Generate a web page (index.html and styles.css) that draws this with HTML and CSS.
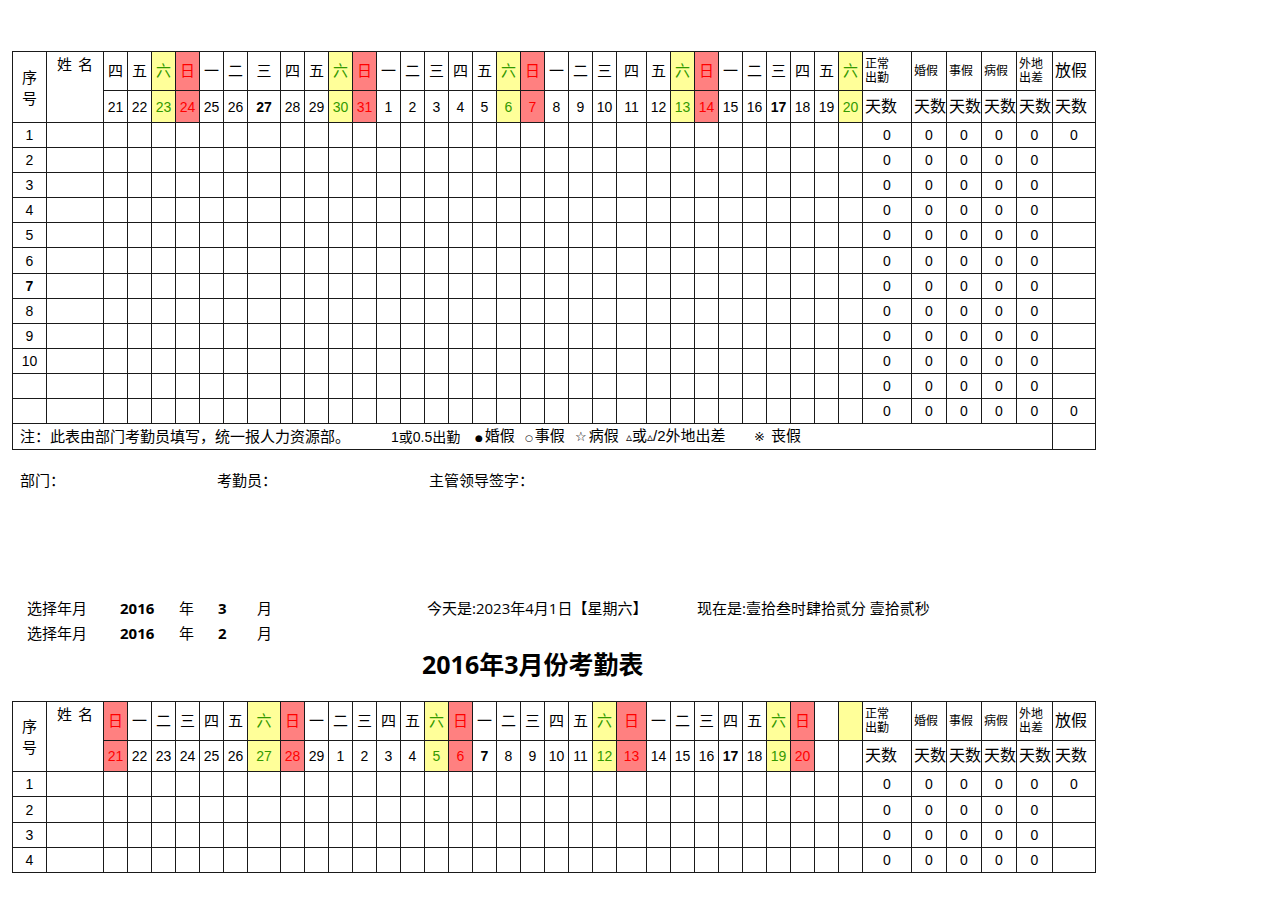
FILE: index.html
```html
<!DOCTYPE html>
<html lang="zh-CN">
<head>
<meta charset="utf-8">
<title>考勤表</title>
<link rel="stylesheet" href="styles.css">
</head>
<body>
<div class="page">

<table class="sheet top">
<colgroup>
<col class="c-seq"><col class="c-name">
<col class="d"><col class="d"><col class="d"><col class="d"><col class="d"><col class="d"><col class="d33">
<col class="d"><col class="d"><col class="d"><col class="d"><col class="d"><col class="d"><col class="d"><col class="d"><col class="d"><col class="d"><col class="d"><col class="d"><col class="d"><col class="d"><col class="d30">
<col class="d"><col class="d"><col class="d"><col class="d"><col class="d"><col class="d"><col class="d"><col class="d"><col class="d">
<col class="c49"><col class="c35"><col class="c35"><col class="c35"><col class="c36"><col class="c43">
</colgroup>
<tr class="h1">
<td rowspan="2" class="seq-h">序<br>号</td>
<td rowspan="2" class="name-h">姓 名</td>
<td>四</td><td>五</td><td class="sat">六</td><td class="sun">日</td><td>一</td><td>二</td><td>三</td><td>四</td><td>五</td><td class="sat">六</td><td class="sun">日</td><td>一</td><td>二</td><td>三</td><td>四</td><td>五</td><td class="sat">六</td><td class="sun">日</td><td>一</td><td>二</td><td>三</td><td>四</td><td>五</td><td class="sat">六</td><td class="sun">日</td><td>一</td><td>二</td><td>三</td><td>四</td><td>五</td><td class="sat">六</td>
<td class="lab sm">正常<br>出勤</td><td class="lab xs">婚假</td><td class="lab xs">事假</td><td class="lab xs">病假</td><td class="lab sm">外地<br>出差</td><td class="lab lg">放假</td>
</tr>
<tr class="h2">
<td>21</td><td>22</td><td class="sat">23</td><td class="sun">24</td><td>25</td><td>26</td><td class="b">27</td><td>28</td><td>29</td><td class="sat">30</td><td class="sun">31</td><td>1</td><td>2</td><td>3</td><td>4</td><td>5</td><td class="sat">6</td><td class="sun">7</td><td>8</td><td>9</td><td>10</td><td>11</td><td>12</td><td class="sat">13</td><td class="sun">14</td><td>15</td><td>16</td><td class="b">17</td><td>18</td><td>19</td><td class="sat">20</td>
<td class="lab lg">天数</td><td class="lab lg">天数</td><td class="lab lg">天数</td><td class="lab lg">天数</td><td class="lab lg">天数</td><td class="lab lg">天数</td>
</tr>
<tr class="r"><td>1</td><td></td><td></td><td></td><td></td><td></td><td></td><td></td><td></td><td></td><td></td><td></td><td></td><td></td><td></td><td></td><td></td><td></td><td></td><td></td><td></td><td></td><td></td><td></td><td></td><td></td><td></td><td></td><td></td><td></td><td></td><td></td><td></td><td>0</td><td>0</td><td>0</td><td>0</td><td>0</td><td>0</td></tr>
<tr class="r"><td>2</td><td></td><td></td><td></td><td></td><td></td><td></td><td></td><td></td><td></td><td></td><td></td><td></td><td></td><td></td><td></td><td></td><td></td><td></td><td></td><td></td><td></td><td></td><td></td><td></td><td></td><td></td><td></td><td></td><td></td><td></td><td></td><td></td><td>0</td><td>0</td><td>0</td><td>0</td><td>0</td><td></td></tr>
<tr class="r"><td>3</td><td></td><td></td><td></td><td></td><td></td><td></td><td></td><td></td><td></td><td></td><td></td><td></td><td></td><td></td><td></td><td></td><td></td><td></td><td></td><td></td><td></td><td></td><td></td><td></td><td></td><td></td><td></td><td></td><td></td><td></td><td></td><td></td><td>0</td><td>0</td><td>0</td><td>0</td><td>0</td><td></td></tr>
<tr class="r"><td>4</td><td></td><td></td><td></td><td></td><td></td><td></td><td></td><td></td><td></td><td></td><td></td><td></td><td></td><td></td><td></td><td></td><td></td><td></td><td></td><td></td><td></td><td></td><td></td><td></td><td></td><td></td><td></td><td></td><td></td><td></td><td></td><td></td><td>0</td><td>0</td><td>0</td><td>0</td><td>0</td><td></td></tr>
<tr class="r"><td>5</td><td></td><td></td><td></td><td></td><td></td><td></td><td></td><td></td><td></td><td></td><td></td><td></td><td></td><td></td><td></td><td></td><td></td><td></td><td></td><td></td><td></td><td></td><td></td><td></td><td></td><td></td><td></td><td></td><td></td><td></td><td></td><td></td><td>0</td><td>0</td><td>0</td><td>0</td><td>0</td><td></td></tr>
<tr class="r"><td>6</td><td></td><td></td><td></td><td></td><td></td><td></td><td></td><td></td><td></td><td></td><td></td><td></td><td></td><td></td><td></td><td></td><td></td><td></td><td></td><td></td><td></td><td></td><td></td><td></td><td></td><td></td><td></td><td></td><td></td><td></td><td></td><td></td><td>0</td><td>0</td><td>0</td><td>0</td><td>0</td><td></td></tr>
<tr class="r"><td class="b">7</td><td></td><td></td><td></td><td></td><td></td><td></td><td></td><td></td><td></td><td></td><td></td><td></td><td></td><td></td><td></td><td></td><td></td><td></td><td></td><td></td><td></td><td></td><td></td><td></td><td></td><td></td><td></td><td></td><td></td><td></td><td></td><td></td><td>0</td><td>0</td><td>0</td><td>0</td><td>0</td><td></td></tr>
<tr class="r"><td>8</td><td></td><td></td><td></td><td></td><td></td><td></td><td></td><td></td><td></td><td></td><td></td><td></td><td></td><td></td><td></td><td></td><td></td><td></td><td></td><td></td><td></td><td></td><td></td><td></td><td></td><td></td><td></td><td></td><td></td><td></td><td></td><td></td><td>0</td><td>0</td><td>0</td><td>0</td><td>0</td><td></td></tr>
<tr class="r"><td>9</td><td></td><td></td><td></td><td></td><td></td><td></td><td></td><td></td><td></td><td></td><td></td><td></td><td></td><td></td><td></td><td></td><td></td><td></td><td></td><td></td><td></td><td></td><td></td><td></td><td></td><td></td><td></td><td></td><td></td><td></td><td></td><td></td><td>0</td><td>0</td><td>0</td><td>0</td><td>0</td><td></td></tr>
<tr class="r"><td>10</td><td></td><td></td><td></td><td></td><td></td><td></td><td></td><td></td><td></td><td></td><td></td><td></td><td></td><td></td><td></td><td></td><td></td><td></td><td></td><td></td><td></td><td></td><td></td><td></td><td></td><td></td><td></td><td></td><td></td><td></td><td></td><td></td><td>0</td><td>0</td><td>0</td><td>0</td><td>0</td><td></td></tr>
<tr class="r"><td></td><td></td><td></td><td></td><td></td><td></td><td></td><td></td><td></td><td></td><td></td><td></td><td></td><td></td><td></td><td></td><td></td><td></td><td></td><td></td><td></td><td></td><td></td><td></td><td></td><td></td><td></td><td></td><td></td><td></td><td></td><td></td><td></td><td>0</td><td>0</td><td>0</td><td>0</td><td>0</td><td></td></tr>
<tr class="r"><td></td><td></td><td></td><td></td><td></td><td></td><td></td><td></td><td></td><td></td><td></td><td></td><td></td><td></td><td></td><td></td><td></td><td></td><td></td><td></td><td></td><td></td><td></td><td></td><td></td><td></td><td></td><td></td><td></td><td></td><td></td><td></td><td></td><td>0</td><td>0</td><td>0</td><td>0</td><td>0</td><td>0</td></tr>
<tr class="note-row">
<td colspan="38" class="note">
<div class="note-line">
<span class="n-main">注：此表由部门考勤员填写，统一报人力资源部。</span>
<span class="n-1">1或0.5出勤</span>
<span class="n-2"><span class="sym">●</span>婚假</span>
<span class="n-3"><span class="sym">○</span>事假</span>
<span class="n-4"><span class="sym star">☆</span>病假</span>
<span class="n-5"><span class="sym tri">▵</span>或<span class="sym tri">▵</span>/2外地出差</span>
<span class="n-6"><span class="sym big">※</span> 丧假</span>
</div>
</td>
<td></td>
</tr>
</table>

<div class="sign">
<span>部门：</span>
<span>考勤员：</span>
<span>主管领导签字：</span>
</div>

<div class="select">
<span>选择年月</span><span class="bold">2016</span><span>年</span><span class="bold">3</span><span>月</span><span>今天是:2023年4月1日【星期六】</span><span>现在是:壹拾叁时肆拾贰分 壹拾贰秒</span>
<span>选择年月</span><span class="bold">2016</span><span>年</span><span class="bold">2</span><span>月</span><span></span><span></span>
</div>

<h1 class="title">2016年3月份考勤表</h1>

<table class="sheet bottom">
<colgroup>
<col class="c-seq"><col class="c-name">
<col class="d"><col class="d"><col class="d"><col class="d"><col class="d"><col class="d"><col class="d33">
<col class="d"><col class="d"><col class="d"><col class="d"><col class="d"><col class="d"><col class="d"><col class="d"><col class="d"><col class="d"><col class="d"><col class="d"><col class="d"><col class="d"><col class="d30">
<col class="d"><col class="d"><col class="d"><col class="d"><col class="d"><col class="d"><col class="d"><col class="d"><col class="d">
<col class="c49"><col class="c35"><col class="c35"><col class="c35"><col class="c36"><col class="c43">
</colgroup>
<tr class="h1">
<td rowspan="2" class="seq-h">序<br>号</td>
<td rowspan="2" class="name-h">姓 名</td>
<td class="sun">日</td><td>一</td><td>二</td><td>三</td><td>四</td><td>五</td><td class="sat">六</td><td class="sun">日</td><td>一</td><td>二</td><td>三</td><td>四</td><td>五</td><td class="sat">六</td><td class="sun">日</td><td>一</td><td>二</td><td>三</td><td>四</td><td>五</td><td class="sat">六</td><td class="sun">日</td><td>一</td><td>二</td><td>三</td><td>四</td><td>五</td><td class="sat">六</td><td class="sun">日</td><td></td><td class="sat"></td>
<td class="lab sm">正常<br>出勤</td><td class="lab xs">婚假</td><td class="lab xs">事假</td><td class="lab xs">病假</td><td class="lab sm">外地<br>出差</td><td class="lab lg">放假</td>
</tr>
<tr class="h2">
<td class="sun">21</td><td>22</td><td>23</td><td>24</td><td>25</td><td>26</td><td class="sat">27</td><td class="sun">28</td><td>29</td><td>1</td><td>2</td><td>3</td><td>4</td><td class="sat">5</td><td class="sun">6</td><td class="b">7</td><td>8</td><td>9</td><td>10</td><td>11</td><td class="sat">12</td><td class="sun">13</td><td>14</td><td>15</td><td>16</td><td class="b">17</td><td>18</td><td class="sat">19</td><td class="sun">20</td><td></td><td></td>
<td class="lab lg">天数</td><td class="lab lg">天数</td><td class="lab lg">天数</td><td class="lab lg">天数</td><td class="lab lg">天数</td><td class="lab lg">天数</td>
</tr>
<tr class="r"><td>1</td><td></td><td></td><td></td><td></td><td></td><td></td><td></td><td></td><td></td><td></td><td></td><td></td><td></td><td></td><td></td><td></td><td></td><td></td><td></td><td></td><td></td><td></td><td></td><td></td><td></td><td></td><td></td><td></td><td></td><td></td><td></td><td></td><td>0</td><td>0</td><td>0</td><td>0</td><td>0</td><td>0</td></tr>
<tr class="r tall"><td>2</td><td></td><td></td><td></td><td></td><td></td><td></td><td></td><td></td><td></td><td></td><td></td><td></td><td></td><td></td><td></td><td></td><td></td><td></td><td></td><td></td><td></td><td></td><td></td><td></td><td></td><td></td><td></td><td></td><td></td><td></td><td></td><td></td><td>0</td><td>0</td><td>0</td><td>0</td><td>0</td><td></td></tr>
<tr class="r"><td>3</td><td></td><td></td><td></td><td></td><td></td><td></td><td></td><td></td><td></td><td></td><td></td><td></td><td></td><td></td><td></td><td></td><td></td><td></td><td></td><td></td><td></td><td></td><td></td><td></td><td></td><td></td><td></td><td></td><td></td><td></td><td></td><td></td><td>0</td><td>0</td><td>0</td><td>0</td><td>0</td><td></td></tr>
<tr class="r"><td>4</td><td></td><td></td><td></td><td></td><td></td><td></td><td></td><td></td><td></td><td></td><td></td><td></td><td></td><td></td><td></td><td></td><td></td><td></td><td></td><td></td><td></td><td></td><td></td><td></td><td></td><td></td><td></td><td></td><td></td><td></td><td></td><td></td><td>0</td><td>0</td><td>0</td><td>0</td><td>0</td><td></td></tr>
</table>

</div>
</body>
</html>
```

FILE: styles.css
```css
html, body {
  margin: 0;
  padding: 0;
  background: #ffffff;
}

body {
  font-family: "Liberation Sans", "Noto Sans CJK SC", sans-serif;
  color: #000000;
}

.page {
  padding: 51px 0 0 12px;
}

/* ---------- sheet tables ---------- */
.sheet {
  border-collapse: collapse;
  table-layout: fixed;
  width: 1083px;
}

.sheet col.c-seq { width: 34px; }
.sheet col.c-name { width: 57px; }
.sheet col.d { width: 24px; }
.sheet col.d33 { width: 33px; }
.sheet col.d30 { width: 30px; }
.sheet col.c49 { width: 49px; }
.sheet col.c35 { width: 35px; }
.sheet col.c36 { width: 36px; }
.sheet col.c43 { width: 43px; }

.sheet td {
  border: 1px solid #1a1a1a;
  padding: 0;
  text-align: center;
  vertical-align: middle;
  font-size: 14px;
  line-height: 16px;
  white-space: nowrap;
  overflow: hidden;
}

.sheet tr.h1 td { height: 38px; font-size: 15px; }
.sheet tr.h2 td { height: 31px; }
.sheet tr.r td { height: 24px; }
.sheet.top tr.r:nth-child(8) td { height: 25px; }
.sheet tr.r.tall td { height: 25px; }
.sheet tr.note-row td { height: 25px; }

.sheet.bottom tr.h2 td { height: 30px; }

.sheet td.seq-h {
  font-size: 15px;
  line-height: 21px;
  padding-top: 1px;
}

.sheet td.name-h {
  vertical-align: top;
  font-size: 15px;
  line-height: 18px;
  padding-top: 4px;
  word-spacing: 2px;
}

.sheet td.sat {
  background: #ffff99;
  color: #339900;
}

.sheet td.sun {
  background: #ff8080;
  color: #ff0000;
}

.sheet td.b {
  font-weight: 700;
}

.sheet td.lab {
  text-align: left;
  padding-left: 2px;
}

.sheet td.lab.sm {
  font-size: 12px;
  line-height: 14px;
}

.sheet td.lab.xs {
  font-size: 12px;
}

.sheet tr.h1 td.lab.lg,
.sheet td.lab.lg {
  font-size: 16px;
}

/* ---------- note row ---------- */
.sheet td.note {
  text-align: left;
  padding-left: 7px;
}

.note-line {
  display: grid;
  grid-template-columns: 371px 84px 50px 50px 51px 128px auto;
  align-items: center;
  font-size: 15px;
}

.note-line .n-1 {
  font-size: 14px;
}

.sym {
  font-family: "DejaVu Sans", sans-serif;
  font-size: 9px;
  margin-right: 2px;
}

.sym.star {
  font-size: 13px;
}

.sym.tri {
  font-size: 12px;
  margin-right: 0;
}

.sym.big {
  font-size: 13px;
}

/* ---------- signature line ---------- */
.sign {
  display: grid;
  grid-template-columns: 197px 212px auto;
  margin-top: 22px;
  padding-left: 8px;
  height: 18px;
  line-height: 18px;
  font-size: 15px;
}

/* ---------- year/month selector ---------- */
.select {
  display: grid;
  grid-template-columns: 93px 59px 39px 39px 170px 270px auto;
  grid-auto-rows: 25px;
  align-items: center;
  margin-top: 105px;
  padding-left: 15px;
  font-family: "Open Sans", "Noto Sans CJK SC", sans-serif;
  font-size: 15px;
}

.select .bold {
  font-weight: 700;
}

/* ---------- title ---------- */
.title {
  margin: 4px 0 22px 410px;
  height: 30px;
  line-height: 30px;
  font-family: "Open Sans", "Noto Sans CJK SC", sans-serif;
  font-size: 25px;
  font-weight: 700;
}
```
